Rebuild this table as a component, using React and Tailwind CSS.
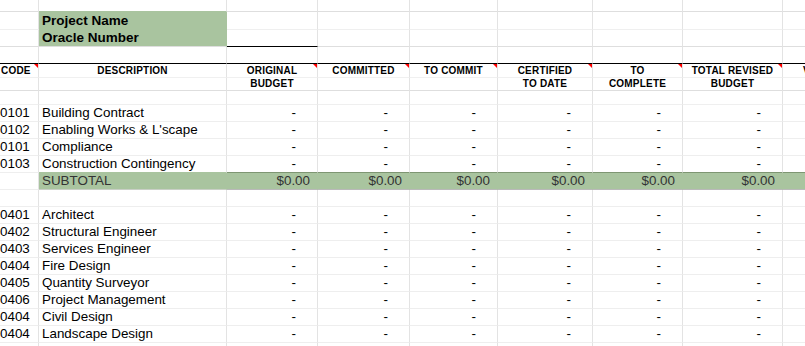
import React from "react";

const W = [
  "w-[39px]",
  "w-[188px]",
  "w-[91px]",
  "w-[92px]",
  "w-[88px]",
  "w-[95px]",
  "w-[90px]",
  "w-[100px]",
  "w-[94px]",
];

const GREEN = "bg-[#a9c49f]";

function Tri() {
  return (
    <div className="absolute top-0 right-[-1px] w-[5px] h-[5px] bg-[#ff0000] [clip-path:polygon(0_0,100%_0,100%_100%)]" />
  );
}

function Row({ h, children }) {
  return <div className={`flex shrink-0 ${h}`}>{children}</div>;
}

function Cell({ i, className = "", children }) {
  return (
    <div
      className={`${W[i]} shrink-0 relative border-r border-b box-border flex items-center overflow-hidden whitespace-nowrap ${className}`}
    >
      {children}
    </div>
  );
}

const headers1 = ["CODE", "DESCRIPTION", "ORIGINAL", "COMMITTED", "TO COMMIT", "CERTIFIED", "TO", "TOTAL REVISED", "VARIANCE"];
const headers2 = ["", "", "BUDGET", "", "", "TO DATE", "COMPLETE", "BUDGET", ""];
const triangles = [true, false, true, true, true, true, true, true, false];

const group1 = [
  ["0101", "Building Contract"],
  ["0102", "Enabling Works & L'scape"],
  ["0101", "Compliance"],
  ["0103", "Construction Contingency"],
];
const group2 = [
  ["0401", "Architect"],
  ["0402", "Structural Engineer"],
  ["0403", "Services Engineer"],
  ["0404", "Fire Design"],
  ["0405", "Quantity Surveyor"],
  ["0406", "Project Management"],
  ["0404", "Civil Design"],
  ["0404", "Landscape Design"],
];

function DataRow({ code, desc, last }) {
  return (
    <Row h="h-[17px]">
      {W.map((_, i) => {
        let bb = "border-b-[#eeeeee]";
        if (last) bb = i === 1 ? "border-b-[#a9c49f]" : i === 0 ? "border-b-[#eeeeee]" : "border-b-[#7e9672]";
        const base = `border-r-[#e3e3e3] ${bb}`;
        if (i === 0)
          return (
            <Cell key={i} i={i} className={`${base} pl-0`}>
              {code}
            </Cell>
          );
        if (i === 1)
          return (
            <Cell key={i} i={i} className={`${base} pl-[3px]`}>
              {desc}
            </Cell>
          );
        if (i === 8) return <Cell key={i} i={i} className={base} />;
        return (
          <Cell key={i} i={i} className={`${base} justify-end pr-[21px]`}>
            -
          </Cell>
        );
      })}
    </Row>
  );
}

function EmptyRow({ h = "h-[17px]", line = "border-b-[#eeeeee]" }) {
  return (
    <Row h={h}>
      {W.map((_, i) => (
        <Cell key={i} i={i} className={`border-r-[#e3e3e3] ${line}`} />
      ))}
    </Row>
  );
}

function SubtotalRow() {
  return (
    <Row h="h-[17px]">
      {W.map((_, i) => {
        if (i === 0) return <Cell key={i} i={i} className="border-r-[#e3e3e3] border-b-[#eeeeee]" />;
        if (i === 1)
          return (
            <Cell key={i} i={i} className={`${GREEN} border-r-[#a9c49f] border-b-[#c9cfc6] pl-[3px] text-[#333333]`}>
              SUBTOTAL
            </Cell>
          );
        if (i === 8) return <Cell key={i} i={i} className={`${GREEN} border-r-[#a9c49f] border-b-[#b9b9b9]`} />;
        return (
          <Cell key={i} i={i} className={`${GREEN} border-r-[#a9c49f] border-b-[#b9b9b9] justify-end pr-[7px] text-[#333333]`}>
            $0.00
          </Cell>
        );
      })}
    </Row>
  );
}

export default function App() {
  return (
    <div className="w-[805px] h-[346px] overflow-hidden bg-white text-black font-['Liberation_Sans',Arial,sans-serif] text-[13.4px] leading-none">
      <div className="flex flex-col w-[877px]">
        {/* row 0 */}
        <Row h="h-[12px]">
          {W.map((_, i) => (
            <Cell key={i} i={i} className={`border-r-[#e3e3e3] ${i === 1 ? "border-b-[#a9c49f]" : "border-b-[#dedede]"}`} />
          ))}
        </Row>
        {/* Project Name */}
        <Row h="h-[18px]">
          {W.map((_, i) =>
            i === 1 ? (
              <Cell key={i} i={i} className={`${GREEN} border-r-[#a9c49f] border-b-[#a9c49f] pl-[3px] font-bold text-[13.5px]`}>
                Project Name
              </Cell>
            ) : (
              <Cell key={i} i={i} className="border-r-[#e3e3e3] border-b-[#efefef]" />
            )
          )}
        </Row>
        {/* Oracle Number */}
        <Row h="h-[17px]">
          {W.map((_, i) =>
            i === 1 ? (
              <Cell key={i} i={i} className={`${GREEN} border-r-[#a9c49f] border-b-[#dedede] pl-[3px] font-bold text-[13.5px]`}>
                Oracle Number
              </Cell>
            ) : (
              <Cell key={i} i={i} className={`border-r-[#e3e3e3] ${i === 2 ? "border-b-black" : "border-b-[#dedede]"}`} />
            )
          )}
        </Row>
        {/* empty row with black bottom */}
        <Row h="h-[17px]">
          {W.map((_, i) => (
            <Cell key={i} i={i} className="border-r-[#e3e3e3] border-b-black" />
          ))}
        </Row>
        {/* header line 1 */}
        <Row h="h-[14px]">
          {W.map((_, i) => (
            <Cell
              key={i}
              i={i}
              className={`border-r-[#e3e3e3] border-b-[#f0f0f0] font-bold text-[10px] tracking-[0.2px] ${i === 0 ? "pl-[1px]" : "justify-center"}`}
            >
              {headers1[i]}
              {triangles[i] && <Tri />}
            </Cell>
          ))}
        </Row>
        {/* header line 2 */}
        <Row h="h-[13px]">
          {W.map((_, i) => (
            <Cell key={i} i={i} className="border-r-[#e3e3e3] border-b-[#dedede] font-bold text-[10px] tracking-[0.2px] justify-center">
              {headers2[i]}
            </Cell>
          ))}
        </Row>
        <EmptyRow h="h-[14px]" line="border-b-[#efefef]" />
        {group1.map((r, idx) => (
          <DataRow key={idx} code={r[0]} desc={r[1]} last={idx === group1.length - 1} />
        ))}
        <SubtotalRow />
        <EmptyRow />
        {group2.map((r, idx) => (
          <DataRow key={idx} code={r[0]} desc={r[1]} />
        ))}
        <EmptyRow />
      </div>
    </div>
  );
}
